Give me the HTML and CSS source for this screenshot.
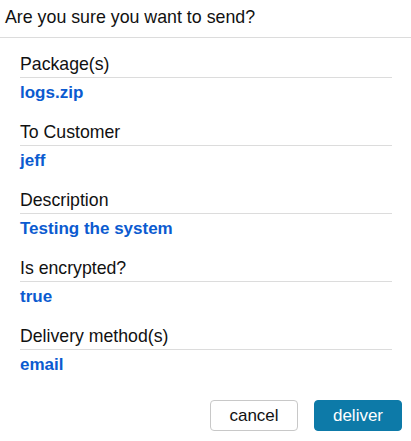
FILE: index.html
```html
<!DOCTYPE html>
<html>
<head>
<meta charset="utf-8">
<link rel="stylesheet" href="styles.css">
</head>
<body>
<div class="dialog">
  <div class="dialog-header">Are you sure you want to send?</div>
  <div class="dialog-body">
    <div class="field">
      <div class="field-label">Package(s)</div>
      <div class="field-value">logs.zip</div>
    </div>
    <div class="field">
      <div class="field-label">To Customer</div>
      <div class="field-value">jeff</div>
    </div>
    <div class="field">
      <div class="field-label">Description</div>
      <div class="field-value">Testing the system</div>
    </div>
    <div class="field">
      <div class="field-label">Is encrypted?</div>
      <div class="field-value">true</div>
    </div>
    <div class="field">
      <div class="field-label">Delivery method(s)</div>
      <div class="field-value">email</div>
    </div>
  </div>
  <div class="dialog-actions">
    <button class="btn btn-cancel">cancel</button>
    <button class="btn btn-primary">deliver</button>
  </div>
</div>
</body>
</html>
```
FILE: styles.css
```css
html, body {
  margin: 0;
  padding: 0;
  background: #fff;
}
body {
  font-family: "Liberation Sans", Arial, sans-serif;
  font-size: 16px;
  color: #111;
}
.dialog {
  width: 411px;
}
.dialog-header {
  padding: 7px 5px 10px;
  font-size: 17.8px;
  line-height: 20px;
  border-bottom: 1px solid #dcdcdc;
}
.dialog-body {
  padding: 16px 19px 0 20px;
}
.field {
  margin-bottom: 20px;
}
.field-label {
  font-size: 17.7px;
  line-height: 20px;
  padding-bottom: 3px;
  border-bottom: 1px solid #dcdcdc;
}
.field-value {
  margin-top: 6px;
  font-size: 17px;
  line-height: 18px;
  font-weight: bold;
  color: #0b5bd0;
}
.dialog-actions {
  display: flex;
  justify-content: flex-end;
  gap: 16px;
  padding: 6px 9px 0 0;
}
.btn {
  width: 88px;
  height: 31px;
  border-radius: 4px;
  font-family: "Liberation Sans", Arial, sans-serif;
  font-size: 17px;
  padding: 0;
  cursor: pointer;
}
.btn-cancel {
  background: #fff;
  color: #111;
  border: 1px solid #c8c8c8;
}
.btn-primary {
  background: #0d7aa8;
  color: #fff;
  border: 1px solid #0d7aa8;
}
```
